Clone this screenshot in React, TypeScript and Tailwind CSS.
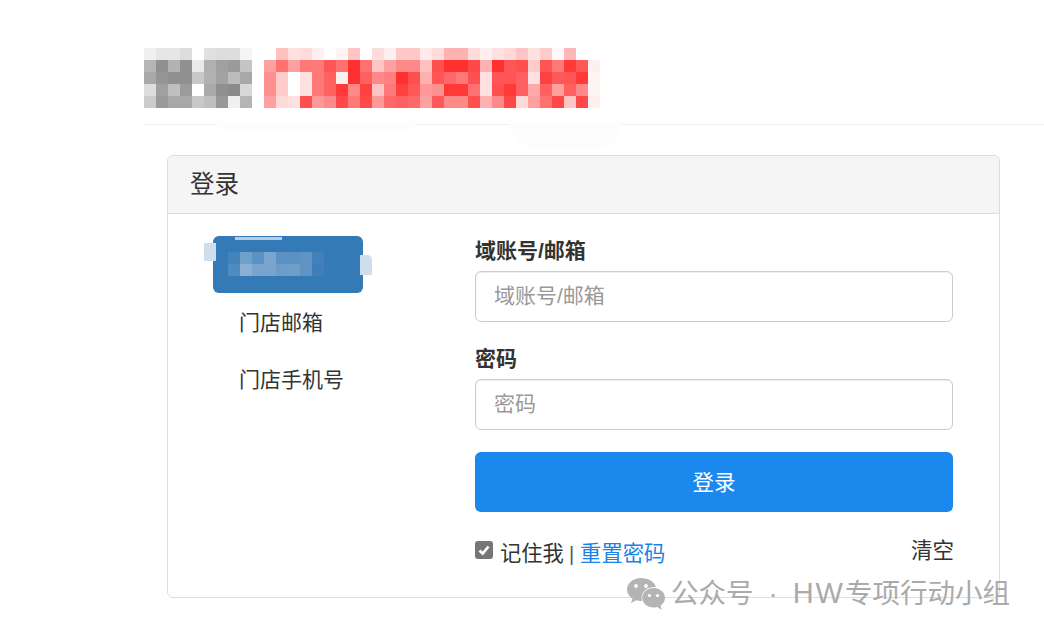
const GRAY = [
  ["f0", "e6", "e6", "dd", "ff", "e0", "dd", "dd", "f5"],
  ["b5", "90", "b3", "90", "ea", "b0", "a0", "9a", "c5"],
  ["a8", "95", "90", "90", "c8", "b2", "a2", "bc", "a8"],
  ["dd", "a0", "bf", "9b", "ff", "aa", "90", "8b", "d8"],
  ["cc", "9a", "a8", "a8", "c8", "bf", "98", "f0", "b5"],
];

const RED = [
  ["ff", "c0", "e0", "dc", "f0", "ff", "f4", "c4", "ff", "dc", "f0", "c8", "c8", "ea", "dc", "b0", "b0", "dc", "f0", "e0", "d8", "c4", "e0", "cc", "f8", "b8", "ff", "ff"],
  ["a0", "70", "a0", "78", "78", "55", "70", "30", "70", "c4", "a0", "88", "88", "c0", "50", "30", "30", "48", "b0", "30", "55", "50", "cc", "55", "78", "38", "58", "f0"],
  ["90", "cc", "ff", "e0", "78", "60", "f0", "30", "60", "88", "80", "30", "50", "b0", "55", "68", "78", "50", "e0", "55", "55", "60", "e0", "40", "58", "55", "38", "f4"],
  ["90", "cc", "ff", "e0", "78", "60", "38", "88", "40", "c4", "78", "40", "58", "98", "90", "38", "38", "70", "e0", "50", "38", "60", "a8", "60", "a0", "60", "88", "f4"],
  ["a0", "d8", "e0", "50", "98", "88", "48", "78", "48", "98", "68", "60", "68", "a0", "58", "88", "88", "50", "b0", "88", "48", "d8", "a0", "70", "48", "c4", "48", "f0"],
];

const TAB_BLUR = [
  ["#4384bc", "#6fa0ca", "#5a92c3", "#7aa6cd", "#5a92c3", "#5a90c2", "#5f93c4", "#4180ba"],
  ["#4e8bc0", "#8aafd2", "#78a4cd", "#78a4cd", "#6c9dc9", "#6f9fc9", "#5f92c5", "#3f7fb9"],
];

function Mosaic() {
  return (
    <svg width="456" height="60" viewBox="0 0 456 60" className="block">
      {GRAY.map((row, y) =>
        row.map((c, x) => (
          <rect key={`g${x}-${y}`} x={x * 12} y={y * 12} width="12" height="12" fill={`#${c}${c}${c}`} />
        )),
      )}
      {RED.map((row, y) =>
        row.map((c, x) => (
          <rect key={`r${x}-${y}`} x={120 + x * 12} y={y * 12} width="12" height="12" fill={`#ff${c}${c}`} />
        )),
      )}
    </svg>
  );
}

function BlurredTab() {
  return (
    <div className="relative h-[57px] w-[150px] rounded-[6px] bg-[#337ab7]">
      <div className="absolute left-[-9px] top-[7px] h-[18px] w-[12px] bg-[#cfdeec]" />
      <div className="absolute right-[-9px] top-[19px] h-[20px] w-[12px] rounded-tr-[5px] bg-[#cfdeec]" />
      <div className="absolute left-[22px] top-[1px] h-[3px] w-[47px] bg-[#b5cee3]" />
      <svg width="96" height="24" viewBox="0 0 96 24" className="absolute left-[15px] top-[16px]">
        {TAB_BLUR.map((row, y) =>
          row.map((c, x) => <rect key={`${x}-${y}`} x={x * 12} y={y * 12} width="12" height="12" fill={c} />),
        )}
      </svg>
    </div>
  );
}

function Field({ label, mt }: { label: string; mt: string }) {
  return (
    <div className={mt}>
      <label className="block h-[36px] text-[21px] font-bold leading-[32px] text-[#333]">{label}</label>
      <input
        type="text"
        placeholder={label}
        className="block h-[51px] w-full rounded-[6px] border border-[#ccc] bg-white px-[18px] pb-[2px] text-[21px] text-[#555] shadow-[inset_0_1px_1px_rgba(0,0,0,0.075)] outline-none placeholder:text-[#999]"
      />
    </div>
  );
}

function WechatIcon() {
  return (
    <svg width="38" height="32" viewBox="0 0 38 32" fill="#b4b4b4">
      <path d="M14 0C6.3 0 0 5 0 11.4c0 3.7 2.1 6.8 5.5 9L4 25l5.300-2.800c1.500.4 3.100.7 4.700.7h1.100a10 10 0 0 1-.5-3.100C14.600 13.700 20.300 9 27.500 9c.5 0 1 0 1.400.1C27.600 3.800 21.400 0 14 0Z" />
      <path d="M38 19.800C38 14.400 32.700 10.100 26.500 10.100S15.300 14.400 15.300 19.800s5 9.700 11.200 9.700c1.300 0 2.600-.2 3.800-.6L34.800 32l-1.200-4.300c2.700-1.800 4.400-4.700 4.400-7.900Z" />
      <circle cx="9" cy="8" r="1.900" fill="#fff" />
      <circle cx="19" cy="8" r="1.900" fill="#fff" />
      <circle cx="22.500" cy="17.500" r="1.600" fill="#fff" />
      <circle cx="30.500" cy="17.500" r="1.600" fill="#fff" />
    </svg>
  );
}

export default function App() {
  return (
    <main className="relative h-[636px] w-[1044px] overflow-hidden bg-white font-['Liberation_Sans','Noto_Sans_CJK_SC',sans-serif] text-[#333]">
      <header className="ml-[144px] border-b border-[#eee] pb-[16px] pt-[48px]">
        <Mosaic />
      </header>
      {/* smudged-out bits over the header rule */}
      <div className="absolute left-[215px] top-[122px] h-[9px] w-[202px] rounded-b-full bg-[#fdfdfd]" />
      <div className="absolute left-[509px] top-[122px] h-[27px] w-[112px] rounded-b-full bg-[#fdfdfd]" />

      <section className="ml-[167px] mt-[30px] h-[443px] w-[833px] rounded-[6px] border border-[#ddd] bg-white">
        <div className="flex h-[58px] items-center rounded-t-[6px] border-b border-[#ddd] bg-[#f5f5f5] px-[22px] pt-[2px] text-[24.500px] leading-none">
          登录
        </div>

        <div className="flex">
          <nav className="ml-[45px] mt-[22px] w-[150px] shrink-0">
            <BlurredTab />
            <div className="mt-[12px] flex h-[36px] items-center pl-[26px] text-[21px]">门店邮箱</div>
            <div className="mt-[21px] flex h-[36px] items-center pl-[26px] text-[21px]">门店手机号</div>
          </nav>

          <form className="ml-[112px] mt-[21px] w-[478px]">
            <Field label="域账号/邮箱" mt="" />
            <Field label="密码" mt="mt-[21px]" />
            <button
              type="button"
              className="mt-[22px] block h-[60px] w-full rounded-[6px] bg-[#1b88ee] pt-[2px] text-[21.500px] text-white"
            >
              登录
            </button>
            <div className="mt-[24px] flex items-start justify-between">
              <div className="flex items-center text-[21.300px] leading-[36px]">
                <span className="mb-[8px] mr-[7px] flex h-[18px] w-[18px] items-center justify-center rounded-[3px] bg-[#767676]">
                  <svg width="14" height="14" viewBox="0 0 14 14" fill="none" stroke="#fff" strokeWidth="2.600">
                    <path d="M2.500 7.500 5.700 10.500 11.500 3.500" />
                  </svg>
                </span>
                记住我<span className="ml-[5px] mr-[6px] text-[20px] text-[#555]">|</span>
                <a className="text-[#1b82e6]">重置密码</a>
              </div>
              <span className="mr-[-1px] text-[21.500px] leading-[30px]">清空</span>
            </div>
          </form>
        </div>
      </section>

      <div className="absolute left-[627px] top-[577px] flex items-center">
        <WechatIcon />
        <span className="ml-[6px] whitespace-nowrap text-[27.500px] leading-[32px] text-[#aaa]">
          公众号<span className="mx-[15px]">·</span>
          <span className="text-[29px] tracking-[2px]">HW</span>专项行动小组
        </span>
      </div>
    </main>
  );
}
